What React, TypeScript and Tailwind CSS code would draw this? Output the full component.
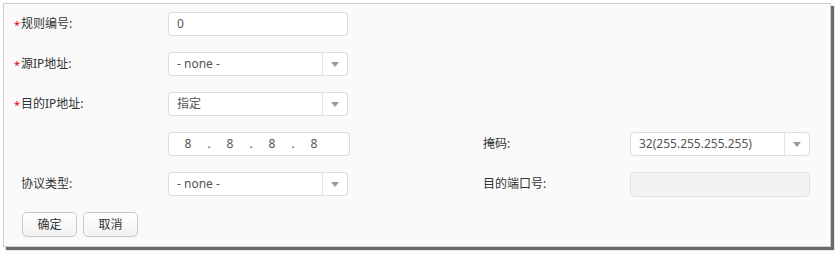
import React from "react";

const font = { fontFamily: '"Noto Sans", "Noto Sans CJK SC", sans-serif' };

function Label({ text, req }: { text: string; req?: boolean }) {
  return (
    <div className="flex w-[154px] shrink-0 items-center text-[12px] text-[#333]">
      <span className="w-[7px] text-[#e00] text-[11px] leading-none">{req ? "*" : ""}</span>
      <span>{text}</span>
    </div>
  );
}

function Select({ value }: { value: string }) {
  return (
    <div className="flex h-[24px] w-[180px] shrink-0 items-center rounded-[4px] border border-[#dcdcdc] bg-white">
      <div className="flex-1 pl-[8px] text-[12px] text-[#555]">{value}</div>
      <div className="flex h-full w-[25px] items-center justify-center border-l border-[#e3e3e3]">
        <div className="h-0 w-0 border-x-[4px] border-t-[5px] border-x-transparent border-t-[#9a9a9a]" />
      </div>
    </div>
  );
}

export default function App() {
  return (
    <div className="min-h-[254px] w-[839px] bg-white pl-[3px] pt-[3px]" style={font}>
      <div className="h-[244px] w-[828px] border border-[#cfcfcf] bg-[#fafafa] pl-[10px] pt-[8px] shadow-[3px_3px_1px_#6a6a6a]">
        <div className="flex flex-col gap-[16px]">
          <div className="flex h-[24px] items-center">
            <Label text="规则编号:" req />
            <div className="flex h-[24px] w-[180px] items-center rounded-[4px] border border-[#dcdcdc] bg-white pl-[8px] text-[12px] text-[#555]">
              0
            </div>
          </div>
          <div className="flex h-[24px] items-center">
            <Label text="源IP地址:" req />
            <Select value="- none -" />
          </div>
          <div className="flex h-[24px] items-center">
            <Label text="目的IP地址:" req />
            <Select value="指定" />
          </div>
          <div className="flex h-[24px] items-center">
            <div className="w-[154px] shrink-0" />
            <div className="flex h-[24px] w-[182px] shrink-0 items-center rounded-[4px] border border-[#dcdcdc] bg-white px-[4px] text-[12px] text-[#555]">
              <span className="w-[30px] text-center">8</span>
              <span className="w-[12px] text-center">.</span>
              <span className="w-[30px] text-center">8</span>
              <span className="w-[12px] text-center">.</span>
              <span className="w-[30px] text-center">8</span>
              <span className="w-[12px] text-center">.</span>
              <span className="w-[30px] text-center">8</span>
            </div>
            <div className="w-[133px] shrink-0" />
            <div className="w-[147px] shrink-0 text-[12px] text-[#333]">掩码:</div>
            <Select value="32(255.255.255.255)" />
          </div>
          <div className="flex h-[24px] items-center">
            <Label text="协议类型:" />
            <Select value="- none -" />
            <div className="w-[135px] shrink-0" />
            <div className="w-[147px] shrink-0 text-[12px] text-[#333]">目的端口号:</div>
            <div className="h-[25px] w-[180px] shrink-0 rounded-[4px] border border-[#e2e2e2] bg-[#f2f2f2]" />
          </div>
          <div className="ml-[8px] flex gap-[6px]">
            <button className="h-[25px] w-[55px] rounded-[5px] border border-[#c8c8c8] bg-gradient-to-b from-white to-[#f2f2f2] text-[12px] text-[#333]">
              确定
            </button>
            <button className="h-[25px] w-[55px] rounded-[5px] border border-[#c8c8c8] bg-gradient-to-b from-white to-[#f2f2f2] text-[12px] text-[#333]">
              取消
            </button>
          </div>
        </div>
      </div>
    </div>
  );
}
